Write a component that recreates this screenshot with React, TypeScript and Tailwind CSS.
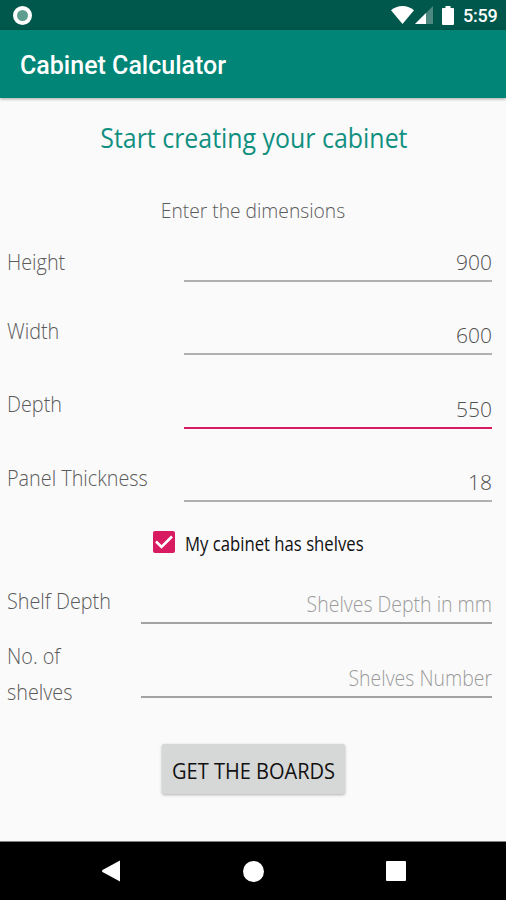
import { useState } from 'react'
import clsx from 'clsx'

interface Field {
  label: string
  value: string
  placeholder?: string
  rowClass: string
  labelClass: string
  active?: boolean
}

const DIMENSIONS: Field[] = [
  { label: 'Height', value: '900', rowClass: 'h-[54px]', labelClass: 'pt-[15px]' },
  { label: 'Width', value: '600', rowClass: 'h-[73px]', labelClass: 'pt-[30px]' },
  { label: 'Depth', value: '550', rowClass: 'h-[74px]', labelClass: 'pt-[30px]', active: true },
  { label: 'Panel Thickness', value: '18', rowClass: 'h-[73px]', labelClass: 'pt-[30px]' },
]

const SHELVES: Field[] = [
  { label: 'Shelf Depth', value: '', placeholder: 'Shelves Depth in mm', rowClass: 'h-[49px]', labelClass: 'pt-[7px]' },
  { label: 'No. of shelves', value: '', placeholder: 'Shelves Number', rowClass: 'h-[74px]', labelClass: 'pt-[13px]' },
]

function StatusBar() {
  return (
    <div className="flex h-[30px] shrink-0 items-center bg-[#00574b] pr-[9px] pl-[13px] text-white">
      <div className="size-[19px] rounded-full border-4 border-white bg-[#5e9e90]" />
      <svg className="ml-auto" width="23" height="18" viewBox="0 0 23 18" fill="#fff">
        <path d="M0 4.2C3 1.7 7 0 11.5 0S20 1.7 23 4.2L11.5 18z" />
      </svg>
      <svg className="ml-px" width="19" height="18" viewBox="0 0 19 18">
        <path d="M18 0v18H0z" fill="#fff" fillOpacity="0.3" />
        <path d="M11 7v11H0z" fill="#fff" />
      </svg>
      <svg className="ml-[8px]" width="12" height="19" viewBox="0 0 12 19" fill="#fff">
        <path d="M3.5 0h5v2H11q1 0 1 1v15q0 1-1 1H1q-1 0-1-1V3q0-1 1-1h2.500z" />
      </svg>
      <span className="ml-[9px] w-[34px] pt-px font-[Roboto] text-[18px] font-medium tracking-[-0.2px]">5:59</span>
    </div>
  )
}

function FieldRow({ field, narrow }: { field: Field; narrow?: boolean }) {
  const [value, setValue] = useState(field.value)
  return (
    <label className={clsx('flex pr-[14px] pl-[7px]', field.rowClass)}>
      <span className={clsx('shrink-0', field.labelClass, narrow ? 'w-[134px]' : 'w-[177px]')}>
        <span
          className={clsx(
            'block origin-left scale-x-[0.9] text-[22px] leading-9 text-[#5a5a5a]',
            narrow && 'w-[120px]',
          )}
        >
          {field.label}
        </span>
      </span>
      <span
        className={clsx(
          'min-w-0 flex-1 self-end border-b-2',
          field.active ? 'border-[#d81b60]' : narrow ? 'border-[#a3a3a3]' : 'border-[#b0b0b0]',
        )}
      >
        <input
          className={clsx(
            'block w-full origin-right text-right leading-[30px] text-[#505050] outline-none placeholder:text-[#9a9a9a]',
            value ? 'pb-[3px] text-[21px]' : 'scale-x-[0.885] pb-[4px] text-[22px]',
          )}
          value={value}
          placeholder={field.placeholder}
          onChange={(e) => setValue(e.target.value)}
        />
      </span>
    </label>
  )
}

function NavBar() {
  return (
    <div className="flex h-[59px] shrink-0 items-center justify-between border-t border-[#808080] bg-black pr-[100px] pl-[102px]">
      <svg width="18" height="22" viewBox="0 0 18 22" fill="#fff">
        <path d="M18 0.500v21L0.500 12q-1-1 0-2z" />
      </svg>
      <div className="size-[21px] rounded-full bg-white" />
      <div className="size-[20px] rounded-[1px] bg-white" />
    </div>
  )
}

export default function App() {
  const [hasShelves, setHasShelves] = useState(true)
  return (
    <div className="flex h-[900px] w-[506px] flex-col overflow-hidden bg-[#fafafa] font-['Open_Sans',sans-serif] font-light">
      <StatusBar />
      <header className="flex h-[68px] shrink-0 items-center bg-[#008577] px-[20px] pt-[4px] shadow-[0_1px_3px_rgba(0,0,0,0.35)]">
        <h1 className="font-[Roboto] text-[25px] font-medium text-white">Cabinet Calculator</h1>
      </header>

      <main className="flex flex-1 flex-col">
        <h2 className="mt-[19px] scale-x-[0.89] pl-[2px] text-center text-[28px] leading-[40px] font-normal text-[#109080]">
          Start creating your cabinet
        </h2>
        <p className="mt-[37px] h-[34px] scale-x-[0.915] text-center text-[21px] leading-[32px] text-[#5a5a5a]">
          Enter the dimensions
        </p>

        {DIMENSIONS.map((field) => (
          <FieldRow key={field.label} field={field} />
        ))}

        <button
          type="button"
          className="mt-[21px] ml-[153px] flex h-[40px] items-center self-start"
          onClick={() => setHasShelves(!hasShelves)}
        >
          <span className="mb-[3px] flex size-[22px] items-center justify-center rounded-[2px] bg-[#d81b60]">
            {hasShelves && (
              <svg width="18" height="14" viewBox="0 0 18 14" fill="none" stroke="#fff" strokeWidth="2.6">
                <path d="M1 6.500L6.500 12L17 1.500" />
              </svg>
            )}
          </span>
          <span className="ml-[10px] origin-left scale-x-[0.835] pt-px text-[20px] font-normal text-[#111]">
            My cabinet has shelves
          </span>
        </button>

        <div className="mt-[12px]">
          {SHELVES.map((field) => (
            <FieldRow key={field.label} field={field} narrow />
          ))}
        </div>

        <button
          type="button"
          className="mt-[46px] ml-[162px] h-[50px] w-[183px] rounded-[2px] bg-[#d6d7d7] pt-[2px] text-[22px] font-normal text-[#111] shadow-[0_1px_3px_rgba(0,0,0,0.3)]"
        >
          <span className="block scale-x-[0.91] whitespace-nowrap">GET THE BOARDS</span>
        </button>
      </main>

      <NavBar />
    </div>
  )
}
